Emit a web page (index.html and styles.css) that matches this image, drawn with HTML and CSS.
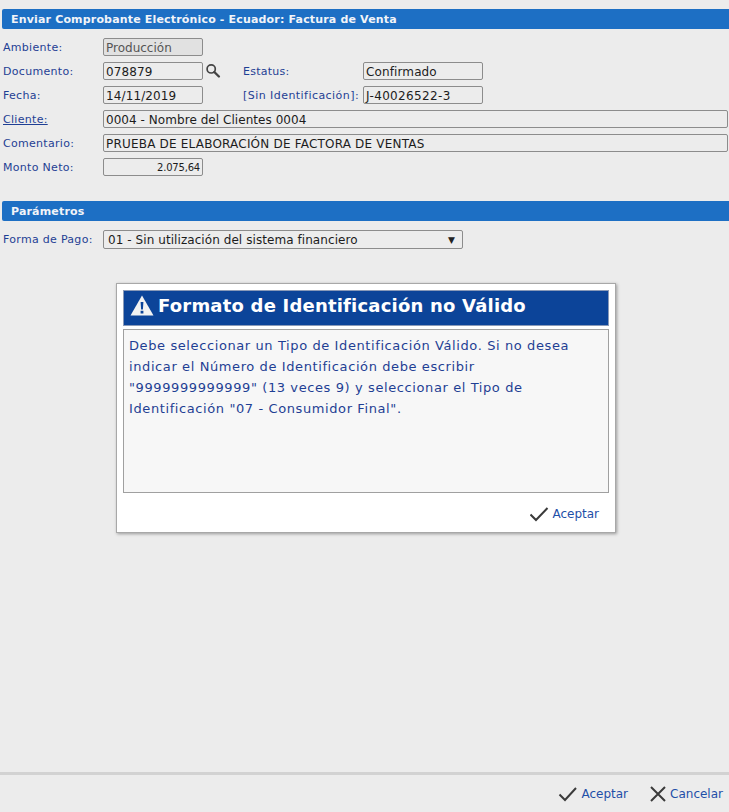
FILE: index.html
```html
<!DOCTYPE html>
<html lang="es">
<head>
<meta charset="utf-8">
<title>Enviar Comprobante Electrónico</title>
<link rel="stylesheet" href="styles.css">
</head>
<body>
<main class="content">
  <h2 class="bar">Enviar Comprobante Electrónico - Ecuador: Factura de Venta</h2>
  <div class="form">
    <div class="row">
      <label class="lbl">Ambiente:</label>
      <div class="fld short off">Producción</div>
    </div>
    <div class="row">
      <label class="lbl">Documento:</label>
      <div class="fld short">078879</div>
      <svg class="search" width="16" height="16" viewBox="0 0 16 16"><circle cx="6.2" cy="5.9" r="4.1" fill="none" stroke="#444" stroke-width="1.7"/><path d="M9.3 9l4.6 4.5" stroke="#444" stroke-width="2.4" stroke-linecap="round"/></svg>
      <label class="lbl2">Estatus:</label>
      <div class="fld mid">Confirmado</div>
    </div>
    <div class="row">
      <label class="lbl">Fecha:</label>
      <div class="fld short">14/11/2019</div>
      <span class="gap"></span>
      <label class="lbl2 wide">[Sin Identificación]:</label>
      <div class="fld mid roomy">J-40026522-3</div>
    </div>
    <div class="row">
      <label class="lbl link">Cliente:</label>
      <div class="fld long">0004 - Nombre del Clientes 0004</div>
    </div>
    <div class="row">
      <label class="lbl">Comentario:</label>
      <div class="fld long caps">PRUEBA DE ELABORACIÓN DE FACTORA DE VENTAS</div>
    </div>
    <div class="row">
      <label class="lbl">Monto Neto:</label>
      <div class="fld short amount">2.075,64</div>
    </div>
  </div>
  <h2 class="bar second">Parámetros</h2>
  <div class="row pay">
    <label class="lbl">Forma de Pago:</label>
    <div class="sel"><span>01 - Sin utilización del sistema financiero</span><span class="arrow">▼</span></div>
  </div>
</main>
<footer class="foot">
  <a class="act"><svg width="20" height="16" viewBox="0 0 20 16"><path d="M1.5 8.5l5.5 5.5L18 2" fill="none" stroke="#3a3a3a" stroke-width="2"/></svg>Aceptar</a>
  <a class="act"><svg width="18" height="18" viewBox="0 0 18 18"><path d="M2 2l14 14M16 2L2 16" fill="none" stroke="#3a3a3a" stroke-width="2"/></svg>Cancelar</a>
</footer>
<section class="dialog">
  <h1 class="dlg-title"><svg width="24" height="21" viewBox="0 0 24 21"><path d="M12 .5L23.5 20.5H.5z" fill="#f2f2f2"/><path d="M10.6 7h2.8l-.5 7.5h-1.8zM10.6 15.8h2.8v2.6h-2.8z" fill="#0c4499"/></svg><span class="dlg-text">Formato de Identificación no Válido</span></h1>
  <div class="dlg-body">Debe seleccionar un Tipo de Identificación Válido. Si no desea indicar el Número de Identificación debe escribir "9999999999999" (13 veces 9) y seleccionar el Tipo de Identificación "07 - Consumidor Final".</div>
  <div class="dlg-foot">
    <a class="act"><svg width="19" height="16" viewBox="0 0 19 16"><path d="M.5 8.5l5.5 5.5L17.5 2" fill="none" stroke="#3a3a3a" stroke-width="2"/></svg>Aceptar</a>
  </div>
</section>
</body>
</html>
```
FILE: styles.css
```css
* { box-sizing: border-box; }
html, body { height: 100%; }
body {
  margin: 0;
  height: 812px;
  background: #ececec;
  font-family: "DejaVu Sans", Verdana, sans-serif;
  font-size: 11px;
  color: #1f3f94;
  display: flex;
  flex-direction: column;
  overflow: hidden;
  position: relative;
}
.content { flex: 1; padding: 9px 0 0 2px; }
.bar {
  margin: 0;
  height: 20px;
  line-height: 21px;
  padding-left: 9px;
  background: #1d6fc4;
  color: #f2f4f8;
  font-size: 11px;
  font-weight: bold;
  letter-spacing: .17px;
  border-radius: 2px 0 0 2px;
}
.form { padding-top: 9px; display: flex; flex-direction: column; gap: 6px; }
.second { margin-top: 25px; }
.row { display: flex; align-items: center; height: 18px; }
.pay { margin-top: 9px; height: 19px; }
.lbl { width: 101px; padding-left: 1px; flex: none; letter-spacing: .3px; }
.link { color: #1f3f94; text-decoration: underline; }
.lbl2 { width: 120px; flex: none; letter-spacing: .25px; }
.wide { letter-spacing: .45px; }
.fld {
  height: 18px;
  line-height: 18px;
  border: 1px solid #8c8c8c;
  border-radius: 2px;
  padding-left: 2px;
  color: #1c1c1c;
  font-size: 12px;
  letter-spacing: .12px;
  white-space: nowrap;
  flex: none;
}
.short { width: 100px; }
.mid { width: 120px; }
.roomy { letter-spacing: .35px; }
.long { width: 625px; letter-spacing: .05px; }
.caps { letter-spacing: .2px; }
.off { background: #e1e1e1; color: #555; letter-spacing: 0; }
.amount { font-size: 10px; text-align: right; padding-right: 2px; letter-spacing: -.2px; }
.search { margin: 0 0 0 2px; flex: none; }
.search + .lbl2 { margin-left: 22px; }
.gap { width: 40px; flex: none; }
.sel {
  width: 360px;
  height: 19px;
  border: 1px solid #8c8c8c;
  border-radius: 2px;
  padding: 0 7px 0 4px;
  color: #1c1c1c;
  font-size: 12px;
  letter-spacing: .07px;
  display: flex;
  justify-content: space-between;
  align-items: center;
  flex: none;
}
.arrow { font-size: 9px; color: #222; }
.foot {
  height: 40px;
  flex: none;
  border-top: 3px solid #d2d2d2;
  display: flex;
  justify-content: flex-end;
  align-items: center;
  gap: 21px;
  padding-right: 6px;
}
.act { display: flex; align-items: center; gap: 3px; color: #1f4fa8; font-size: 12px; }
.dialog {
  position: absolute;
  left: 116px;
  top: 283px;
  width: 500px;
  height: 250px;
  background: #fff;
  border: 1px solid #a8a8a8;
  box-shadow: 1px 1px 3px rgba(0,0,0,.35);
  padding: 6px 6px 0 6px;
  display: flex;
  flex-direction: column;
}
.dlg-title {
  margin: 0;
  height: 36px;
  padding: 0 0 6px 6px;
  background: #0c4499;
  border: 1px solid #8a9ab8;
  color: #fff;
  font-size: 18px;
  font-weight: bold;
  letter-spacing: .2px;
  display: flex;
  align-items: center;
  gap: 4px;
  white-space: nowrap;
}
.dlg-body {
  margin-top: 3px;
  height: 164px;
  background: #f7f7f7;
  border: 1px solid #a0a0a0;
  padding: 5px 25px 5px 5px;
  font-size: 13px;
  letter-spacing: .6px;
  line-height: 21px;
  color: #1f3f94;
}
.dlg-foot { display: flex; justify-content: flex-end; padding: 13px 10px 0 0; }
```
